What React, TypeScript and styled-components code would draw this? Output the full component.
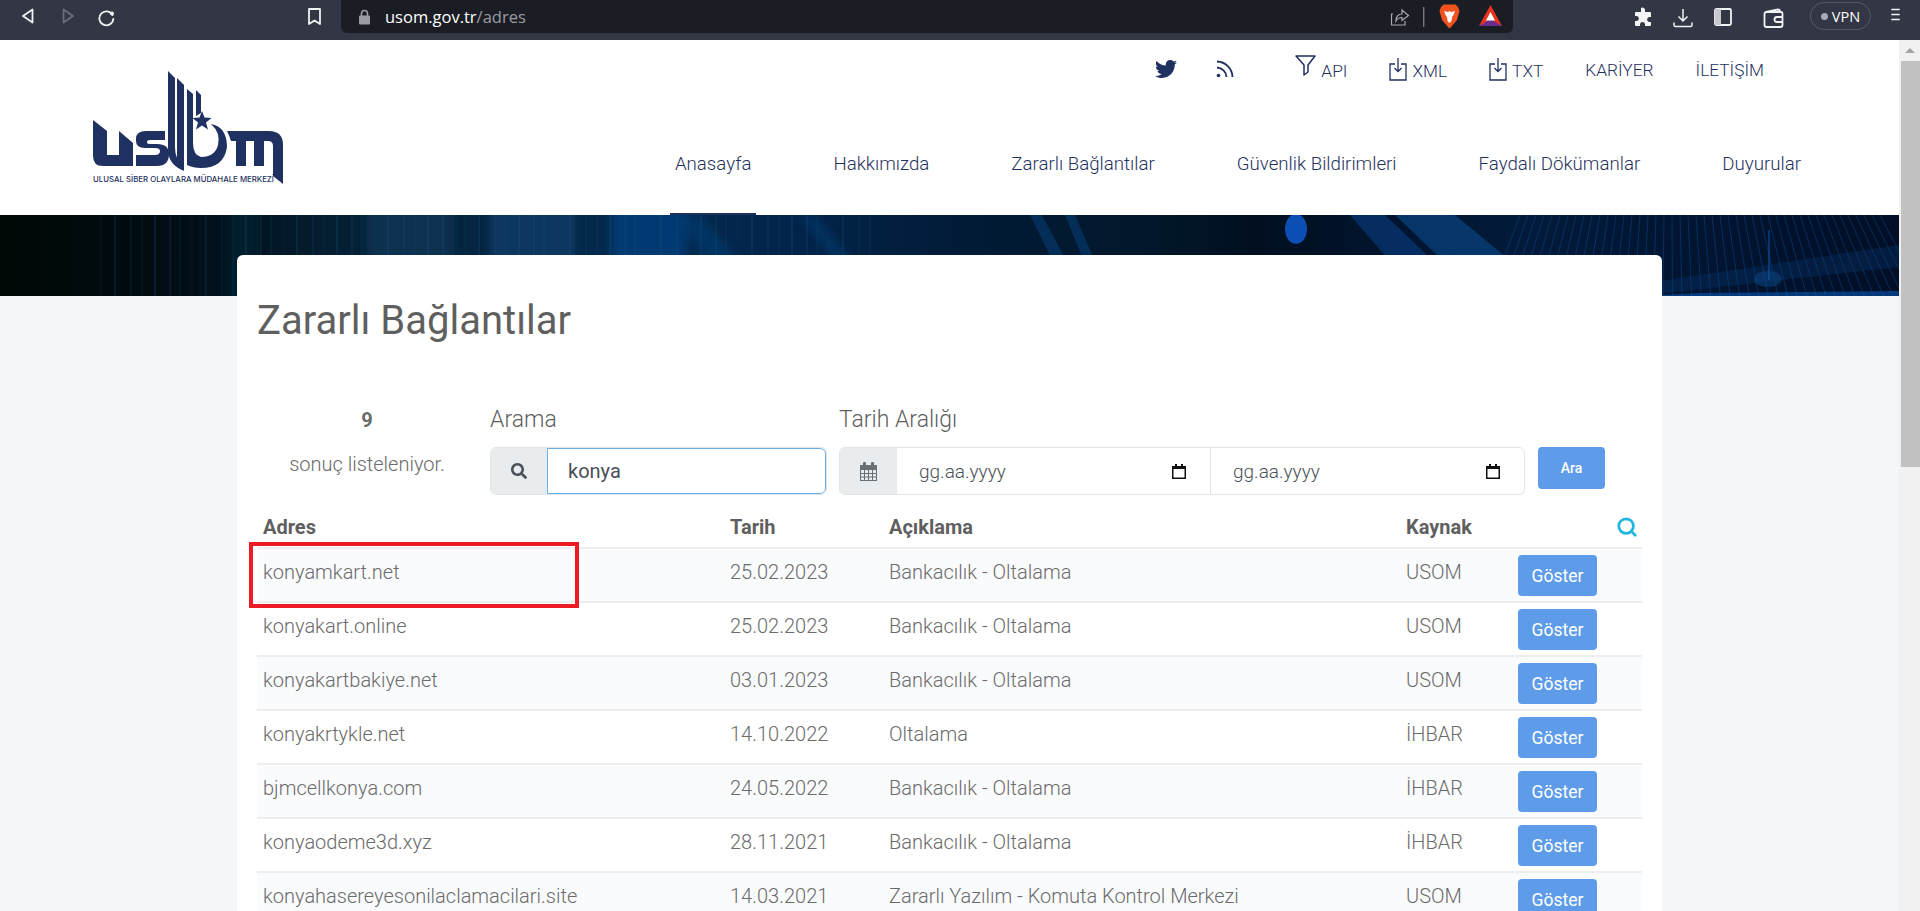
import React from 'react';
import styled, { createGlobalStyle } from 'styled-components';
import { FaTwitter, FaSearch } from 'react-icons/fa';
import { Search } from 'lucide-react';

const navy = '#1f3160';
const textGrey = '#6b6b6b';

const GlobalStyle = createGlobalStyle`
  html, body {
    margin: 0;
    height: 911px;
    overflow: hidden;
    background: #f5f6fa;
    font-family: Roboto, "Liberation Sans", sans-serif;
  }
  * { box-sizing: border-box; }
`;

const Browser = styled.div`
  height: 911px;
  display: flex;
  flex-direction: column;
`;

const Toolbar = styled.div`
  height: 40px;
  flex: none;
  background: #333644;
  display: flex;
  align-items: flex-start;
  position: relative;
`;

const ToolIcon = styled.svg<{ $w: number; $left: number; $top?: number }>`
  width: ${p => p.$w}px;
  height: ${p => p.$w}px;
  margin-left: ${p => p.$left}px;
  margin-top: ${p => p.$top ?? 8}px;
  flex: none;
  fill: none;
  stroke: #f1f2f4;
  stroke-width: 1.8;
`;

const AddressBar = styled.div`
  width: 1172px;
  height: 33px;
  margin-left: 18px;
  background: #1a1d24;
  border-radius: 0 0 6px 6px;
  display: flex;
  align-items: center;
  padding-left: 17px;
  flex: none;
`;

const Url = styled.span`
  margin-left: 14px;
  font-family: "Open Sans", sans-serif;
  font-size: 16.5px;
  color: #fff;
  flex: 1;
  span { color: #9a9ca3; }
`;

const VpnPill = styled.div`
  width: 61px;
  height: 28px;
  margin: 2px 0 0 26px;
  border: 1px solid #555868;
  border-radius: 14px;
  display: flex;
  align-items: center;
  justify-content: center;
  gap: 4px;
  font-family: "Open Sans", sans-serif;
  font-size: 14.5px;
  color: #fff;
  flex: none;
  i { width: 7px; height: 7px; border-radius: 50%; background: #a7a9b5; }
`;

const Viewport = styled.div`
  flex: 1;
  display: flex;
  min-height: 0;
`;

const Main = styled.div`
  flex: 1;
  min-width: 0;
  overflow: hidden;
`;

const ScrollTrack = styled.div`
  width: 21px;
  flex: none;
  background: #f1f1f1;
  display: flex;
  flex-direction: column;
  align-items: center;
  padding-top: 8px;
  &::before {
    content: '';
    border-left: 5px solid transparent;
    border-right: 5px solid transparent;
    border-bottom: 5px solid #a3a3a3;
  }
`;

const ScrollThumb = styled.div`
  width: 100%;
  height: 406px;
  margin: 8px 0 0 3px;
  background: #c1c1c1;
`;

const Header = styled.header`
  height: 175px;
  background: #fff;
  display: flex;
  justify-content: space-between;
  padding-left: 93px;
`;

const LogoWrap = styled.svg`
  width: 190px;
  height: 114px;
  margin-top: 31px;
  flex: none;
`;

const HeaderRight = styled.div`
  display: flex;
  flex-direction: column;
  justify-content: space-between;
  align-items: flex-end;
  padding-right: 93px;
`;

const TopLinks = styled.div`
  display: flex;
  align-items: center;
  gap: 42px;
  height: 40px;
  margin-top: 10px;
  margin-right: 42px;
`;

const TopLink = styled.a`
  display: flex;
  align-items: flex-end;
  gap: 5px;
  font-size: 17.3px;
  font-weight: 300;
  color: ${navy};
  line-height: 24px;
  svg { flex: none; }
`;

const OutlineIcon = styled.svg`
  fill: none;
  stroke: ${navy};
  stroke-width: 1.3;
  margin-bottom: 2px;
  overflow: visible;
`;

const MainNav = styled.nav`
  display: flex;
  gap: 72px;
`;

const NavLink = styled.a<{ $active?: boolean }>`
  padding: 0 5px;
  height: 72px;
  line-height: 42px;
  font-size: 18.7px;
  font-weight: 300;
  color: ${navy};
  border-bottom: 2px solid ${p => (p.$active ? navy : 'transparent')};
`;

const Banner = styled.div`
  height: 81px;
  position: relative;
  overflow: hidden;
  background: #020c18;
  svg { position: absolute; inset: 0; width: 100%; height: 100%; }
`;

const Card = styled.section`
  position: relative;
  width: 1425px;
  margin: -41px auto 0;
  background: #fff;
  border-radius: 6px 6px 0 0;
  padding: 41px 20px 0;
  color: ${textGrey};
`;

const Title = styled.h1`
  margin: 0 0 61px;
  font-size: 40px;
  line-height: 50px;
  font-weight: 400;
  color: #5f5f5f;
`;

const FilterRow = styled.div`
  display: flex;
  align-items: flex-start;
  margin-bottom: 15px;
`;

const ResultCount = styled.div`
  width: 220px;
  margin-right: 13px;
  text-align: center;
  font-size: 20px;
  font-weight: 300;
  strong { display: block; font-size: 20px; font-weight: 700; line-height: 26px; margin-bottom: 19px; }
`;

const Field = styled.div<{ $width: number; $gap: number }>`
  width: ${p => p.$width}px;
  margin-right: ${p => p.$gap}px;
`;

const FieldLabel = styled.label`
  display: block;
  font-size: 23px;
  font-weight: 300;
  line-height: 26px;
  margin-bottom: 14px;
  color: #5f5f5f;
`;

const InputGroup = styled.div`
  display: flex;
  height: 48px;
  border: 1px solid #e0e5e8;
  border-radius: 6px;
  overflow: hidden;
`;

const Addon = styled.div<{ $width: number }>`
  width: ${p => p.$width}px;
  flex: none;
  background: #e9ecef;
  color: #495057;
  display: flex;
  align-items: center;
  justify-content: center;
  font-size: 16px;
`;

const TextInput = styled.input`
  flex: 1;
  min-width: 0;
  border: 1px solid #6cb0e8;
  border-radius: 0 6px 6px 0;
  outline: none;
  padding: 0 20px;
  font: 400 20px Roboto, sans-serif;
  color: #495057;
`;

const DateField = styled.div<{ $last?: boolean }>`
  flex: 1;
  display: flex;
  align-items: center;
  justify-content: space-between;
  padding: 0 24px 0 22px;
  border-right: ${p => (p.$last ? 'none' : '1px solid #e0e5e8')};
  font-size: 19px;
  font-weight: 300;
  color: #495057;
`;

const AraButton = styled.button`
  width: 67px;
  height: 42px;
  border: none;
  border-radius: 4px;
  background: #5e9cea;
  color: #fff;
  font: 500 14px Roboto, sans-serif;
  margin-top: 40px;
`;

const Table = styled.table`
  width: 1385px;
  table-layout: fixed;
  border-collapse: collapse;
  font-size: 20px;
  font-weight: 300;
`;

const HeadCell = styled.th<{ $width: number }>`
  width: ${p => p.$width}px;
  height: 38px;
  padding: 0 6px 4px;
  text-align: left;
  font-weight: 700;
  font-size: 20px;
  color: #5f5f5f;
  vertical-align: middle;
`;

const TableIconCell = styled.th`
  padding: 0 4px 4px 0;
  text-align: right;
  vertical-align: middle;
  color: #1fb6e0;
  line-height: 0;
`;

const Row = styled.tr<{ $striped: boolean }>`
  height: 54px;
  background: ${p => (p.$striped ? '#fafbfd' : '#fff')};
  border-top: 2px solid #eeeeee;
`;

const Cell = styled.td`
  padding: 11px 6px 0;
  vertical-align: top;
  line-height: 24px;
  color: ${textGrey};
  white-space: nowrap;
`;

const ActionCell = styled.td`
  padding: 6px 6px 0;
  vertical-align: top;
`;

const ShowButton = styled.button`
  width: 79px;
  height: 41px;
  border: none;
  border-radius: 4px;
  background: #5e9cea;
  color: #fff;
  font: 400 17.5px Roboto, sans-serif;
`;

const Highlight = styled.div`
  position: absolute;
  left: 12px;
  top: 287px;
  width: 330px;
  height: 66px;
  border: 4px solid #ed1c24;
`;

const rows = [
  ['konyamkart.net', '25.02.2023', 'Bankacılık - Oltalama', 'USOM'],
  ['konyakart.online', '25.02.2023', 'Bankacılık - Oltalama', 'USOM'],
  ['konyakartbakiye.net', '03.01.2023', 'Bankacılık - Oltalama', 'USOM'],
  ['konyakrtykle.net', '14.10.2022', 'Oltalama', 'İHBAR'],
  ['bjmcellkonya.com', '24.05.2022', 'Bankacılık - Oltalama', 'İHBAR'],
  ['konyaodeme3d.xyz', '28.11.2021', 'Bankacılık - Oltalama', 'İHBAR'],
  ['konyahasereyesonilaclamacilari.site', '14.03.2021', 'Zararlı Yazılım - Komuta Kontrol Merkezi', 'USOM'],
];

const Logo = () => (
  <LogoWrap viewBox="0 0 190 114">
    <g fill={navy}>
      <path d="M0 49 L14 60 V84 H26 V60 L40 72 V95 H10 Q0 95 0 85 Z" />
      <path d="M43 84 H62 Q67 84 67 80 Q67 77 62 77 H52 Q43 77 43 70 V68 Q43 60 53 60 H72 V69 H57 Q54 69 54 71 Q54 73 57 73 H64 Q76 73 76 83 Q76 95 64 95 H43 Z" />
      <path d="M75 0 L82 7 V76 Q82 88 89 92 V99 Q75 93 75 78 Z" />
      <path d="M84 7 L91 14 V100 L84 96 Z" />
      <path d="M94 18 L100 23 V72 Q100 84 108 86 Q122 86 125 74 Q128 62 118 53 Q134 56 134 76 Q131 97 108 97 Q100 97 94 94 Z" />
      <path d="M103 19 L108 24 V42 L103 45 Z" />
      <path d="M109 40 L111.5 46.5 L118.5 47 L113 51.5 L115 58.5 L109 54.5 L103 58.5 L105 51.5 L99.5 47 L106.5 46.5 Z" />
      <path d="M134 60 H176 Q190 60 190 74 V113 L180 105 V75 Q180 70 175 70 H171 V95 H161 V70 H153 V95 H143 V70 H138 Q136 64 134 60 Z" />
      <text x="0" y="111" fontFamily="Inter, sans-serif" fontSize="7.5" fontWeight="500" textLength="181" lengthAdjust="spacingAndGlyphs">ULUSAL SİBER OLAYLARA MÜDAHALE MERKEZİ</text>
    </g>
  </LogoWrap>
);

const stripeColumns = [
  [228, 30, '#08202e'], [367, 86, '#0a3354'], [490, 85, '#0b3c66'], [612, 74, '#06407c'],
] as const;

const BannerArt = () => {
  const fan = Array.from({ length: 46 }, (_, i) => i);
  const fine = Array.from({ length: 60 }, (_, i) => i);
  return (
    <svg viewBox="0 0 1899 81" preserveAspectRatio="none">
      <defs>
        <linearGradient id="bannerBase" x1="0" x2="1" y1="0" y2="0">
          <stop offset="0" stopColor="#000805" />
          <stop offset="0.09" stopColor="#020d14" />
          <stop offset="0.2" stopColor="#05233a" />
          <stop offset="0.33" stopColor="#052a4e" />
          <stop offset="0.42" stopColor="#03244a" />
          <stop offset="0.52" stopColor="#011a34" />
          <stop offset="0.6" stopColor="#02182c" />
          <stop offset="0.66" stopColor="#010f20" />
          <stop offset="0.8" stopColor="#021a3a" />
          <stop offset="1" stopColor="#010e26" />
        </linearGradient>
        <filter id="soft"><feGaussianBlur stdDeviation="5" /></filter>
      </defs>
      <rect width="1899" height="81" fill="url(#bannerBase)" />
      <g filter="url(#soft)">
        {stripeColumns.map(([x, w, c]) => (
          <rect key={x} x={x} y="-10" width={w} height="100" fill={c} opacity="0.8" />
        ))}
        <path d="M670 0 H700 L770 81 H740 Z M800 0 H815 L880 81 H860 Z" fill="#053a70" opacity="0.6" />
      </g>
      {fine.map(i => (
        <rect key={i} x={100 + i * 13 + (i * i) % 7} y="0" width="2" height="81" fill="#1a5b8c" opacity={0.06 + ((i * 5) % 7) * 0.025} />
      ))}
      <path d="M1030 0 H1042 L1085 81 H1070 Z M1065 0 H1075 L1110 81 H1098 Z" fill="#06386a" opacity="0.7" />
      <path d="M1350 0 H1385 L1470 81 H1420 Z" fill="#06316a" opacity="0.85" />
      <path d="M1395 0 H1455 L1535 66 L1515 81 H1480 Z" fill="#08407c" opacity="0.75" />
      <ellipse cx="1296" cy="14" rx="11" ry="15" fill="#0b4fb4" />
      {fan.map(i => (
        <line key={i} x1={1520 + i * 8} y1="0" x2={1490 + i * 9.6} y2="81" stroke="#0a4a90" strokeWidth="1" opacity="0.5" />
      ))}
      <path d="M1560 81 L1899 30 V52 L1640 81 Z" fill="#0a3a78" opacity="0.3" />
      <ellipse cx="1768" cy="64" rx="14" ry="8" fill="#0c4886" opacity="0.5" />
      <rect x="1768" y="15" width="2" height="50" fill="#0d5fbe" opacity="0.45" />
      <path d="M1640 81 H1899 V76 L1700 78 Z" fill="#0a55b0" opacity="0.6" />
    </svg>
  );
};

const App: React.FC = () => (
  <Browser>
    <GlobalStyle />
    <Toolbar>
      <ToolIcon $w={16} $left={20} viewBox="0 0 16 16"><path d="M12.5 1.5 V14.5 L3 8 Z" strokeLinejoin="round" /></ToolIcon>
      <ToolIcon $w={16} $left={24} viewBox="0 0 16 16" style={{ stroke: '#6b6e7b' }}><path d="M3.5 1.5 V14.5 L13 8 Z" strokeLinejoin="round" /></ToolIcon>
      <ToolIcon $w={19} $left={21} viewBox="0 0 19 19"><path d="M15.5 7 A7 7 0 1 0 16.3 11" strokeLinecap="round" /><circle cx="15" cy="5.5" r="2" fill="#f1f2f4" stroke="none" /></ToolIcon>
      <ToolIcon $w={17} $left={190} viewBox="0 0 17 17"><path d="M3 1 H14 V16 L8.5 12.5 L3 16 Z" strokeLinejoin="round" /></ToolIcon>
      <AddressBar>
        <svg width="13" height="16" viewBox="0 0 13 16">
          <path d="M3.5 7 V4.5 a3 3 0 0 1 6 0 V7" fill="none" stroke="#9a9ca3" strokeWidth="1.6" />
          <rect x="1" y="6.5" width="11" height="9" rx="1.2" fill="#9a9ca3" />
        </svg>
        <Url>usom.gov.tr<span>/adres</span></Url>
        <ToolIcon $w={20} $left={0} $top={0} viewBox="0 0 20 20" style={{ stroke: '#a6a8b0', strokeWidth: 1.2 }}>
          <path d="M3 7 H1.5 V18 H15 V14 M6 14 C6 9 9 7 12 7 V3 L18.5 8.5 L12 13.5 V10.5 C9.5 10.5 7.5 11.5 6 14 Z" />
        </ToolIcon>
        <svg width="2" height="20" style={{ marginLeft: 13 }}><rect width="1.4" height="20" fill="#73757f" /></svg>
        <svg width="21" height="25" viewBox="0 0 21 25" style={{ marginLeft: 14 }}>
          <path d="M4.5 0.5 H16.5 L19 3 L20.5 7 L18 16 L12.5 22.5 L10.5 24.5 L8.5 22.5 L3 16 L0.5 7 L2 3 Z" fill="#f1531f" />
          <path d="M5 7 L9 8 L10.5 7 L12 8 L16 7 L14.5 11 L13 13 L12.5 17 L10.5 19 L8.5 17 L8 13 L6.5 11 Z" fill="#fff" />
        </svg>
        <svg width="23" height="23" viewBox="0 0 23 23" style={{ marginLeft: 19 }}>
          <path d="M11.5 0 L23 21 H0 Z" fill="#e8341f" />
          <path d="M0 21 L11.5 14 L23 21 Z" fill="#6a2c8e" />
          <path d="M11.5 7 L16 15.5 H7 Z" fill="#fff" />
        </svg>
        <span style={{ width: 11 }} />
      </AddressBar>
      <ToolIcon $w={20} $left={120} $top={7} viewBox="0 0 20 20" style={{ fill: '#f4f4f6', stroke: 'none' }}>
        <path d="M8 1 a2.5 2.5 0 0 1 4 1.5 V5 H17 a1 1 0 0 1 1 1 V10 H16 a2.6 2.6 0 0 0 0 5 H18 V18 a1 1 0 0 1-1 1 H12 V17 a2.6 2.6 0 0 0-5 0 V19 H3 a1 1 0 0 1-1-1 V14 H4 a2.6 2.6 0 0 0 0-5 H2 V6 a1 1 0 0 1 1-1 H8 Z" />
      </ToolIcon>
      <ToolIcon $w={20} $left={20} viewBox="0 0 20 20" style={{ strokeWidth: 1.5 }}>
        <path d="M10 1 V13 M5.5 8.5 L10 13 L14.5 8.5 M1 14.5 V17 Q1 18.5 2.5 18.5 H17.5 Q19 18.5 19 17 V14.5" />
      </ToolIcon>
      <ToolIcon $w={18} $left={21} viewBox="0 0 18 18">
        <rect x="1" y="1" width="16" height="16" rx="1.5" /><rect x="1" y="1" width="6" height="16" fill="#c8c9ce" stroke="none" />
      </ToolIcon>
      <ToolIcon $w={21} $left={31} viewBox="0 0 21 21">
        <path d="M3 4 L15 1.5 Q17 1.5 17 4 M1.5 6 Q1.5 4 3.5 4 H18 Q19.5 4 19.5 6 V17 Q19.5 19 17.5 19 H3.5 Q1.5 19 1.5 17 Z M19.5 9 H14 Q11.5 9 11.5 11.5 Q11.5 14 14 14 H19.5" />
      </ToolIcon>
      <VpnPill><i />VPN</VpnPill>
      <ToolIcon $w={13} $left={18} $top={8} viewBox="0 0 13 17"><path d="M1 2 H12 M1 8.5 H12 M1 15 H12" /></ToolIcon>
    </Toolbar>
    <Viewport>
      <Main>
        <Header>
          <Logo />
          <HeaderRight>
            <TopLinks>
              <TopLink><FaTwitter size={22} color={navy} style={{ marginBottom: 2, marginRight: -4 }} /></TopLink>
              <TopLink style={{ marginRight: 18 }}>
                <OutlineIcon width="20" height="20" viewBox="0 0 20 20" style={{ strokeWidth: 1.8 }}>
                  <path d="M2 8.5 A10 10 0 0 1 11.5 18 M2 2.5 A16 16 0 0 1 17.5 18" /><circle cx="3.5" cy="16.5" r="1.8" fill={navy} stroke="none" />
                </OutlineIcon>
              </TopLink>
              <TopLink>
                <OutlineIcon width="21" height="24" viewBox="0 3 21 24" style={{ strokeWidth: 1.5 }}><path d="M1 2 H20 L13 11 V18 L9 21 V11 Z" strokeLinejoin="round" /></OutlineIcon>API
              </TopLink>
              <TopLink>
                <OutlineIcon width="18" height="24" viewBox="0 0 18 24"><path d="M6 7 H1 V23 H17 V7 H12 M9 1 V14 M5.5 11 L9 14.5 L12.5 11" /></OutlineIcon>XML
              </TopLink>
              <TopLink>
                <OutlineIcon width="18" height="24" viewBox="0 0 18 24"><path d="M6 7 H1 V23 H17 V7 H12 M9 1 V14 M5.5 11 L9 14.5 L12.5 11" /></OutlineIcon>TXT
              </TopLink>
              <TopLink>KARİYER</TopLink>
              <TopLink>İLETİŞİM</TopLink>
            </TopLinks>
            <MainNav>
              <NavLink $active>Anasayfa</NavLink>
              <NavLink>Hakkımızda</NavLink>
              <NavLink>Zararlı Bağlantılar</NavLink>
              <NavLink>Güvenlik Bildirimleri</NavLink>
              <NavLink>Faydalı Dökümanlar</NavLink>
              <NavLink>Duyurular</NavLink>
            </MainNav>
          </HeaderRight>
        </Header>
        <Banner><BannerArt /></Banner>
        <Card>
          <Title>Zararlı Bağlantılar</Title>
          <FilterRow>
            <ResultCount><strong>9</strong>sonuç listeleniyor.</ResultCount>
            <Field $width={337} $gap={12}>
              <FieldLabel>Arama</FieldLabel>
              <InputGroup>
                <Addon $width={56}><FaSearch /></Addon>
                <TextInput readOnly value="konya" />
              </InputGroup>
            </Field>
            <Field $width={686} $gap={13}>
              <FieldLabel>Tarih Aralığı</FieldLabel>
              <InputGroup>
                <Addon $width={57}>
                  <svg width="17" height="19" viewBox="0 0 17 19">
                    <path d="M0 3 H17 V19 H0 Z M1 8 V18 H16 V8 Z" fill="#6a6f74" />
                    <path d="M4.5 8 V18 M8.5 8 V18 M12.5 8 V18 M1 11.5 H16 M1 15 H16" stroke="#6a6f74" strokeWidth="1" />
                    <rect x="3" y="0" width="3" height="5" rx="1.2" fill="#6a6f74" /><rect x="11" y="0" width="3" height="5" rx="1.2" fill="#6a6f74" />
                  </svg>
                </Addon>
                {[false, true].map(last => (
                  <DateField key={String(last)} $last={last}>
                    gg.aa.yyyy
                    <svg width="14" height="15" viewBox="0 0 14 15">
                      <path d="M3 0 H5 V2 H9 V0 H11 V2 H14 V15 H0 V2 H3 Z M1.5 5 V13.5 H12.5 V5 Z" fill="#111" />
                    </svg>
                  </DateField>
                ))}
              </InputGroup>
            </Field>
            <AraButton>Ara</AraButton>
          </FilterRow>
          <Table>
            <thead>
              <tr>
                <HeadCell $width={467}>Adres</HeadCell>
                <HeadCell $width={159}>Tarih</HeadCell>
                <HeadCell $width={517}>Açıklama</HeadCell>
                <HeadCell $width={112}>Kaynak</HeadCell>
                <TableIconCell><Search size={22} strokeWidth={3} /></TableIconCell>
              </tr>
            </thead>
            <tbody>
              {rows.map((r, i) => (
                <Row key={r[0]} $striped={i % 2 === 0}>
                  {r.map(c => <Cell key={c}>{c}</Cell>)}
                  <ActionCell><ShowButton>Göster</ShowButton></ActionCell>
                </Row>
              ))}
            </tbody>
          </Table>
          <Highlight />
        </Card>
      </Main>
      <ScrollTrack><ScrollThumb /></ScrollTrack>
    </Viewport>
  </Browser>
);

export default App;
